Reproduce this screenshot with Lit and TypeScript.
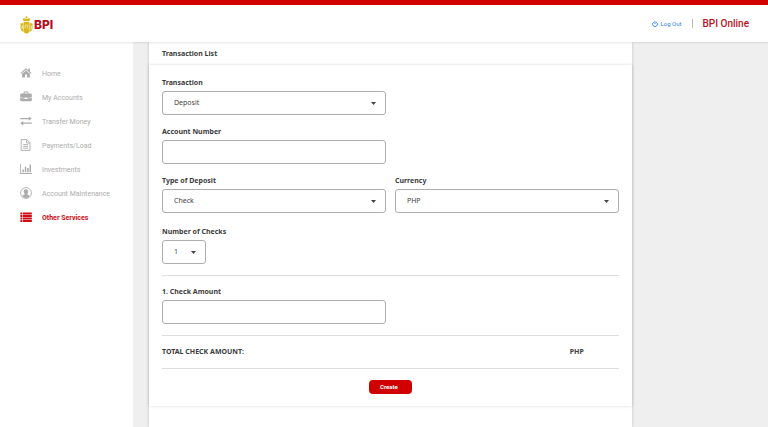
import { LitElement, html, css, svg } from "lit";
import { customElement } from "lit/decorators.js";
import { classMap } from "lit/directives/class-map.js";

const icons = {
  home: svg`<path d="M6 1.2 L0.4 6 L1.1 6.8 L6 2.7 L10.9 6.8 L11.6 6 L9.9 4.6 V1.6 H8.4 V3.3 Z"/><path d="M6 3.5 L2.1 6.8 V10.4 H5 V7.6 H7 V10.4 H9.9 V6.8 Z"/>`,
  briefcase: svg`<path fill-rule="evenodd" d="M3.6 2.6 V1.3 Q3.6 0.6 4.3 0.6 H7.7 Q8.4 0.6 8.4 1.3 V2.6 H10.8 Q11.8 2.6 11.8 3.6 V6.2 Q9.6 6.9 7.4 7 V6.5 H4.6 V7 Q2.4 6.9 0.2 6.2 V3.6 Q0.2 2.6 1.2 2.6 Z M4.6 2.6 H7.4 V1.6 H4.6 Z"/><path d="M0.2 6.7 Q2.4 7.4 4.6 7.5 V8.1 H7.4 V7.5 Q9.6 7.4 11.8 6.7 V9.4 Q11.8 10.2 10.8 10.2 H1.2 Q0.2 10.2 0.2 9.4 Z"/>`,
  transfer: svg`<path d="M0.2 3 H8.8 V1.4 L11.8 3.6 L8.8 5.8 V4.2 H0.2 Z M11.8 7.6 H3.2 V6 L0.2 8.2 L3.2 10.4 V8.8 H11.8 Z"/>`,
  document: svg`<path class="line" d="M1.2 0.6 H6.8 L10 3.8 V11.4 H1.2 Z M6.6 0.6 V4 H10 M3.2 5.6 H8 M3.2 7.4 H8 M3.2 9.2 H8"/>`,
  chart: svg`<path d="M0.2 1 H1.1 V10 H12 V10.9 H0.2 Z M2.4 6.4 H3.9 V9.2 H2.4 Z M4.8 3.8 H6.3 V9.2 H4.8 Z M7.2 5 H8.7 V9.2 H7.2 Z M9.5 1.6 H11 V9.2 H9.5 Z"/>`,
  person: svg`<circle class="line" cx="6" cy="6" r="5.4"/><path d="M6 2.2 C7.8 2.2 8.3 3.4 8.2 4.8 C8.1 5.9 7.6 6.5 7.2 6.9 C7.4 7.8 9.4 7.8 9.8 9.2 Q8.2 10.9 6 10.9 Q3.8 10.9 2.2 9.2 C2.6 7.8 4.6 7.8 4.8 6.9 C4.4 6.5 3.9 5.9 3.8 4.8 C3.7 3.4 4.2 2.2 6 2.2 Z"/>`,
  list: svg`<path d="M0.4 1.4 H2.4 V3.4 H0.4 Z M3 1.4 H11.8 V3.4 H3 Z M0.4 3.9 H2.4 V5.9 H0.4 Z M3 3.9 H11.8 V5.9 H3 Z M0.4 6.4 H2.4 V8.4 H0.4 Z M3 6.4 H11.8 V8.4 H3 Z M0.4 8.9 H2.4 V10.9 H0.4 Z M3 8.9 H11.8 V10.9 H3 Z"/>`,
};

const navItems = [
  { label: "Home", icon: icons.home },
  { label: "My Accounts", icon: icons.briefcase },
  { label: "Transfer Money", icon: icons.transfer },
  { label: "Payments/Load", icon: icons.document },
  { label: "Investments", icon: icons.chart },
  { label: "Account Maintenance", icon: icons.person },
  { label: "Other Services", icon: icons.list, active: true },
];

@customElement("app-root")
export class AppRoot extends LitElement {
  static styles = css`
    :host {
      display: flex;
      flex-direction: column;
      min-height: 100vh;
      background: #efefef;
      color: #3c3c3c;
      font: 7px/10px "Noto Sans", sans-serif;
    }
    * { box-sizing: border-box; }
    header {
      display: flex;
      align-items: center;
      height: 42px;
      padding: 0 19px 0 20px;
      border-top: 5px solid #d00000;
      background: #fff;
      box-shadow: 0 1px 2px rgba(0, 0, 0, 0.1);
      position: relative;
    }
    .logo {
      display: flex;
      align-items: center;
      gap: 1px;
      margin-right: auto;
      padding-top: 2px;
      color: #b90c1a;
      font: 800 12px/18px Inter, sans-serif;
      text-decoration: none;
    }
    .crest { width: 13px; height: 18px; }
    .logout {
      display: flex;
      align-items: center;
      gap: 3px;
      color: #2b83ea;
      font: 6px/10px Roboto, sans-serif;
      text-decoration: none;
    }
    .logout svg { width: 6px; height: 6px; }
    .divider { width: 1px; height: 9px; margin: 0 10px; background: #bbb; }
    .brand { color: #b5121f; font: 500 10px/14px Roboto, sans-serif; }
    .body { display: flex; flex: 1; }
    nav {
      flex: 0 0 133px;
      padding: 20px 0 0 20px;
      background: #fff;
      font-family: Roboto, sans-serif;
    }
    ul { list-style: none; margin: 0; padding: 0; }
    .item {
      display: flex;
      align-items: center;
      gap: 10px;
      height: 24px;
      color: #acacac;
      text-decoration: none;
    }
    .item.active { color: #d00b14; font-weight: bold; }
    .item svg { width: 12px; height: 12px; margin-bottom: 2px; }
    svg { fill: currentColor; flex: none; }
    .line { fill: none; stroke: currentColor; stroke-width: 0.9; }
    main { flex: 1; padding-left: 16px; }
    .panel {
      width: 78%;
      height: 100%;
      background: #fff;
      box-shadow: 0 0 3px rgba(0, 0, 0, 0.2);
    }
    h1 { margin: 0; padding: 7px 13px 6px; font-size: 7px; line-height: 10px; }
    form {
      padding: 13px 13px 12px;
      box-shadow: 0 0 3px rgba(0, 0, 0, 0.16);
    }
    .fields {
      display: grid;
      grid-template-columns: 1fr 1fr;
      gap: 12px 9px;
    }
    .fields + .fields { margin-top: 14px; }
    .field { display: flex; flex-direction: column; gap: 3px; }
    .start { grid-column: 1; }
    label, .total { font-weight: bold; }
    select, input {
      width: 100%;
      height: 24px;
      margin: 0;
      padding: 0 11px;
      border: 1px solid #adadad;
      border-radius: 3px;
      background: #fff;
      color: #444;
      font: inherit;
      appearance: none;
    }
    .select { display: grid; align-items: center; }
    .select > * { grid-area: 1 / 1; }
    .select svg { width: 5px; height: 3px; justify-self: end; margin-right: 10px; color: #444; pointer-events: none; }
    .select.small { width: 44px; }
    hr { height: 1px; margin: 11px 0; border: 0; background: #dedede; }
    .total { display: flex; justify-content: space-between; padding-right: 35px; }
    button {
      display: block;
      width: 43px;
      height: 14px;
      margin: 0 auto;
      padding: 0 3px 0 0;
      border: 0;
      border-radius: 4px;
      background: #d00000;
      color: #fff;
      font: bold 6px/14px Roboto, sans-serif;
    }
  `;

  private select(id: string, label: string, value: string, small = false) {
    return html`<div class="field">
      <label for=${id}>${label}</label>
      <div class=${classMap({ select: true, small })}>
        <select id=${id}><option>${value}</option></select>
        <svg viewBox="0 0 5 3"><path d="M0 0 H5 L2.5 3 Z" /></svg>
      </div>
    </div>`;
  }

  private input(id: string, label: string) {
    return html`<div class="field start">
      <label for=${id}>${label}</label>
      <input id=${id} type="text" />
    </div>`;
  }

  render() {
    return html`
      <header>
        <a class="logo" href="#">
          <svg class="crest" viewBox="0 0 13 18">
            <g fill="#d8b820">
              <circle cx="6.5" cy="1.3" r="1" />
              <path d="M2.6 2.6 Q4.6 1.8 6.5 3 Q8.4 1.8 10.4 2.6 L9.4 5 H3.6 Z" />
              <path d="M4 5.8 H9 V16.4 Q7.6 17.2 6.5 17.8 Q5.4 17.2 4 16.4 Z" />
              <path d="M3.6 6.2 V16 Q0.7 14.6 0.5 12.4 V7.6 Q2.2 7.6 3.6 6.2 Z M9.4 6.2 V16 Q12.3 14.6 12.5 12.4 V7.6 Q10.8 7.6 9.4 6.2 Z" />
            </g>
            <path d="M1.6 13 L2.5 9.6 L3.3 13 M5.2 12.5 V9 H7.8 V12.5 M10 10 H11.5 V13 H10" fill="none" stroke="#fff8d8" stroke-width="0.6" />
          </svg>
          <span>BPI</span>
        </a>
        <a class="logout" href="#">
          <svg viewBox="0 0 6 6"><path d="M1.7 1.2 A2.4 2.4 0 1 0 4.3 1.2 M3 0.2 V3" fill="none" stroke="currentColor" stroke-width="0.9" /></svg>
          Log Out
        </a>
        <span class="divider"></span>
        <span class="brand">BPI Online</span>
      </header>
      <div class="body">
        <nav>
          <ul>
            ${navItems.map(
              (i) => html`<li>
                <a href="#" class=${classMap({ item: true, active: !!i.active })}>
                  <svg viewBox="0 0 12 12">${i.icon}</svg>${i.label}
                </a>
              </li>`
            )}
          </ul>
        </nav>
        <main>
          <div class="panel">
            <h1>Transaction List</h1>
            <form>
              <div class="fields">
                ${this.select("transaction", "Transaction", "Deposit")}
                ${this.input("account", "Account Number")}
                <div class="start">${this.select("type", "Type of Deposit", "Check")}</div>
                ${this.select("currency", "Currency", "PHP")}
              </div>
              <div class="fields">${this.select("count", "Number of Checks", "1", true)}</div>
              <hr />
              <div class="fields">${this.input("amount", "1. Check Amount")}</div>
              <hr />
              <div class="total"><span>TOTAL CHECK AMOUNT:</span><span>PHP</span></div>
              <hr />
              <button type="button">Create</button>
            </form>
          </div>
        </main>
      </div>
    `;
  }
}
